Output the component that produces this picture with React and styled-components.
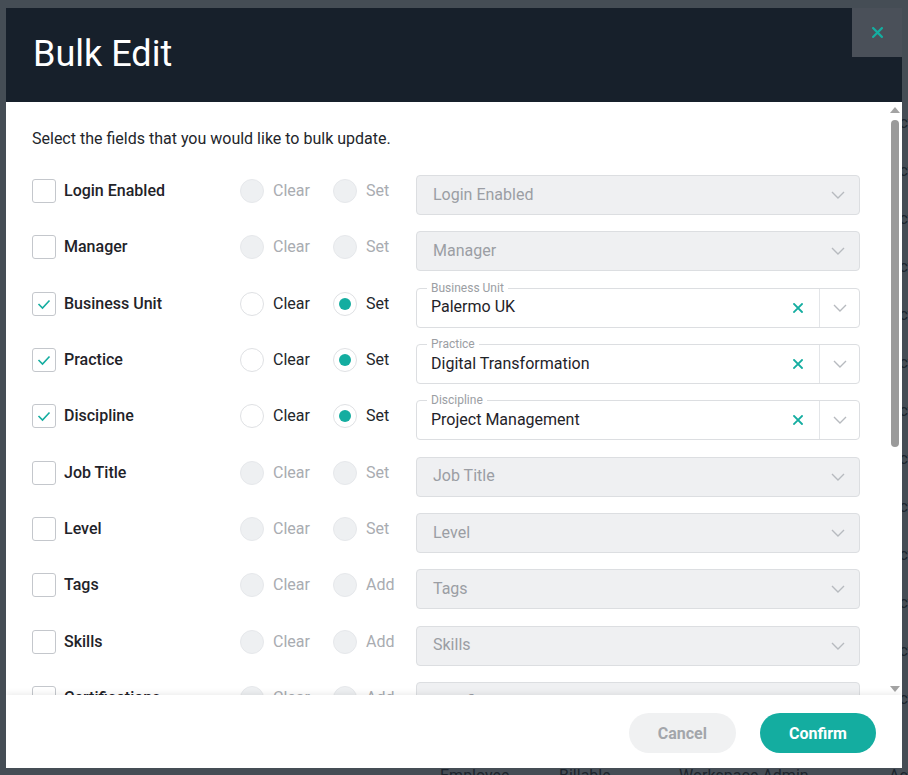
import React from "react";
import styled, { createGlobalStyle } from "styled-components";

const fields = [
  { name: "Login Enabled", mode: "Set" },
  { name: "Manager", mode: "Set" },
  { name: "Business Unit", mode: "Set", checked: true, value: "Palermo UK" },
  { name: "Practice", mode: "Set", checked: true, value: "Digital Transformation" },
  { name: "Discipline", mode: "Set", checked: true, value: "Project Management" },
  { name: "Job Title", mode: "Set" },
  { name: "Level", mode: "Set" },
  { name: "Tags", mode: "Add" },
  { name: "Skills", mode: "Add" },
  { name: "Certifications", mode: "Add" },
  { name: "Location", mode: "Set" },
  { name: "Employment Type", mode: "Set" },
  { name: "Cost Rate", mode: "Set" },
  { name: "Bill Rate", mode: "Set" },
  { name: "Working Hours", mode: "Set" },
  { name: "Calendar", mode: "Set" },
  { name: "Start Date", mode: "Set" },
];

const CheckIcon = () => (
  <svg width="24" height="24" viewBox="0 0 24 24">
    <polyline points="6.5,12 10.5,16 17.5,8.5" fill="none" stroke="#14ada0" strokeWidth="1.6" />
  </svg>
);

const Cross = ({ size = 10, width = 2 }) => (
  <svg width={size} height={size} viewBox="0 0 10 10">
    <path d="M1 1 L9 9 M9 1 L1 9" stroke="#14ada0" strokeWidth={width} strokeLinecap="square" />
  </svg>
);

const Chevron = () => (
  <svg width="14" height="8" viewBox="0 0 14 8">
    <polyline points="1,1 7,7 13,1" fill="none" stroke="#b7babf" strokeWidth="1.4" />
  </svg>
);

const Arrow = ({ down }) => (
  <svg width="10" height="6" viewBox="0 0 10 6">
    <polygon points={down ? "0,0 10,0 5,6" : "0,6 10,6 5,0"} fill="#a3a3a3" />
  </svg>
);

const Radio = ({ label, checked, disabled }) => (
  <RadioOption>
    <RadioCircle checked={checked} disabled={disabled} />
    <RadioLabel disabled={disabled}>{label}</RadioLabel>
  </RadioOption>
);

const FieldRow = ({ field }) => {
  const on = !!field.checked;
  return (
    <Row>
      <Checkbox checked={on}>{on && <CheckIcon />}</Checkbox>
      <FieldName>{field.name}</FieldName>
      <RadioSlot width={93}>
        <Radio label="Clear" disabled={!on} />
      </RadioSlot>
      <RadioSlot width={83}>
        <Radio label={field.mode} checked={on} disabled={!on} />
      </RadioSlot>
      {on ? (
        <Select>
          <FloatLabel>{field.name}</FloatLabel>
          <SelectValue>{field.value}</SelectValue>
          <ClearBtn>
            <Cross size={10} width={1.8} />
          </ClearBtn>
          <Divider />
          <Caret>
            <Chevron />
          </Caret>
        </Select>
      ) : (
        <Select disabled>
          <Placeholder>{field.name}</Placeholder>
          <Caret narrow>
            <Chevron />
          </Caret>
        </Select>
      )}
    </Row>
  );
};

const App = () => {
  return (
    <>
      <GlobalStyle />
      <Page>
        <BackRows>
          {Array.from({ length: 13 }).map((_, i) => (
            <BackRow key={i}>
              <BackCell>Act</BackCell>
            </BackRow>
          ))}
        </BackRows>
        <BackHead>
          <span>Employee</span>
          <span>Billable</span>
          <span>Workspace Admin</span>
          <span>Act</span>
        </BackHead>
      </Page>
      <Overlay>
        <Modal>
          <Header>
            <Title>Bulk Edit</Title>
            <CloseButton>
              <Cross size={11} width={2} />
            </CloseButton>
          </Header>
          <Body>
            <Scroller>
              <Intro>Select the fields that you would like to bulk update.</Intro>
              <Rows>
                {fields.map((f) => (
                  <FieldRow key={f.name} field={f} />
                ))}
              </Rows>
            </Scroller>
            <ScrollTrack>
              <Arrow />
              <Thumb />
              <Arrow down />
            </ScrollTrack>
          </Body>
          <Footer>
            <Button>Cancel</Button>
            <Button primary>Confirm</Button>
          </Footer>
        </Modal>
      </Overlay>
    </>
  );
};

export default App;

const GlobalStyle = createGlobalStyle`
  html, body {
    margin: 0;
    padding: 0;
    height: 100%;
    overflow: hidden;
    font-family: Roboto, "Noto Sans", sans-serif;
    background: #fff;
  }
  * { box-sizing: border-box; }
`;

const Page = styled.div`
  height: 775px;
  width: 908px;
  overflow: hidden;
  display: flex;
  flex-direction: column;
  color: #333;
  font-size: 16px;
`;

const BackRows = styled.div`
  padding-top: 98px;
  flex: 1;
  overflow: hidden;
`;

const BackRow = styled.div`
  height: 48px;
  display: flex;
  align-items: center;
  padding-left: 889px;
`;

const BackCell = styled.span`
  white-space: nowrap;
`;

const BackHead = styled.div`
  display: grid;
  grid-template-columns: 119px 120px 210px 19px;
  padding-left: 440px;
  height: 9px;
  white-space: nowrap;
  font-size: 16px;
  line-height: 20px;
`;

const Overlay = styled.div`
  position: fixed;
  inset: 0;
  background: rgba(23, 32, 43, 0.8);
  padding: 8px 6px 7px 6px;
  display: flex;
`;

const Modal = styled.div`
  flex: 1;
  display: flex;
  flex-direction: column;
  background: #fff;
  overflow: hidden;
`;

const Header = styled.div`
  height: 94px;
  flex-shrink: 0;
  background: #17202b;
  display: flex;
  align-items: flex-start;
  justify-content: space-between;
`;

const Title = styled.h1`
  margin: 0;
  padding: 25px 0 0 27px;
  font-size: 36px;
  font-weight: 400;
  line-height: 42px;
  color: #fff;
`;

const CloseButton = styled.div`
  width: 50px;
  height: 49px;
  background: #4a5059;
  display: flex;
  align-items: center;
  justify-content: center;
`;

const Body = styled.div`
  flex: 1;
  min-height: 0;
  display: flex;
`;

const Scroller = styled.div`
  flex: 1;
  overflow: hidden;
  padding: 25px 28px 24px 26px;
`;

const ScrollTrack = styled.div`
  width: 14px;
  flex-shrink: 0;
  display: flex;
  flex-direction: column;
  align-items: center;
  padding: 5px 0 3px 0;
  & > svg:last-child {
    margin-top: auto;
  }
`;

const Thumb = styled.div`
  width: 8px;
  height: 327px;
  margin-top: 7px;
  margin-right: 1px;
  border-radius: 4px;
  background: #9a9a9a;
`;

const Intro = styled.p`
  margin: 0 0 24px 0;
  font-size: 16px;
  line-height: 24px;
  color: #23262b;
`;

const Rows = styled.div`
  display: flex;
  flex-direction: column;
  gap: 16.35px;
`;

const Row = styled.div`
  display: flex;
  align-items: flex-start;
  height: 40px;
`;

const Checkbox = styled.div`
  width: 24px;
  height: 24px;
  margin-top: 4px;
  flex-shrink: 0;
  border: 1px solid #c4c7cc;
  border-radius: 3px;
  background: #fff;
  display: flex;
  align-items: center;
  justify-content: center;
  & svg {
    margin: -1px;
  }
`;

const FieldName = styled.div`
  width: 176px;
  margin: 4px 0 0 8px;
  font-size: 16px;
  line-height: 24px;
  font-weight: 500;
  color: #1f2329;
  white-space: nowrap;
`;

const RadioSlot = styled.div`
  width: ${(p) => p.width}px;
  margin-top: 4px;
  flex-shrink: 0;
`;

const RadioOption = styled.div`
  display: flex;
  align-items: center;
  gap: 9px;
`;

const RadioCircle = styled.div`
  width: 24px;
  height: 24px;
  border-radius: 50%;
  border: 1px solid ${(p) => (p.disabled ? "#e6e8eb" : "#dfe1e4")};
  background: ${(p) => (p.disabled ? "#eef0f2" : "#fff")};
  display: flex;
  align-items: center;
  justify-content: center;
  &::after {
    content: "";
    display: ${(p) => (p.checked ? "block" : "none")};
    width: 12px;
    height: 12px;
    border-radius: 50%;
    background: #14ada0;
  }
`;

const RadioLabel = styled.span`
  font-size: 16px;
  line-height: 24px;
  color: ${(p) => (p.disabled ? "#a9acb1" : "#23262b")};
`;

const Select = styled.div`
  position: relative;
  flex: 1;
  height: 40px;
  display: flex;
  align-items: center;
  border: 1px solid #dcdee1;
  border-radius: 4px;
  background: ${(p) => (p.disabled ? "#eff0f2" : "#fff")};
`;

const FloatLabel = styled.span`
  position: absolute;
  top: -9px;
  left: 10px;
  padding: 0 4px;
  background: #fff;
  font-size: 12px;
  line-height: 16px;
  color: #9b9ea3;
`;

const SelectValue = styled.span`
  flex: 1;
  padding: 0 0 2px 14px;
  font-size: 16px;
  color: #1f2329;
`;

const Placeholder = styled.span`
  flex: 1;
  padding: 0 0 2px 16px;
  font-size: 16px;
  color: #9b9ea4;
`;

const ClearBtn = styled.span`
  width: 24px;
  display: flex;
  justify-content: center;
  margin-right: 9px;
`;

const Divider = styled.span`
  align-self: stretch;
  width: 1px;
  background: #e3e5e8;
`;

const Caret = styled.span`
  width: ${(p) => (p.narrow ? "42px" : "39px")};
  display: flex;
  justify-content: center;
`;

const Footer = styled.div`
  height: 73px;
  flex-shrink: 0;
  display: flex;
  align-items: center;
  justify-content: flex-end;
  gap: 24px;
  padding: 3px 26px 0 0;
  background: #fff;
  box-shadow: 0 -2px 6px rgba(0, 0, 0, 0.07);
  position: relative;
`;

const Button = styled.button`
  height: 40px;
  border: none;
  border-radius: 20px;
  padding: 0 29px;
  min-width: ${(p) => (p.primary ? "116px" : "107px")};
  font-family: Roboto, sans-serif;
  font-size: 16px;
  font-weight: 700;
  background: ${(p) => (p.primary ? "#14ada0" : "#f0f1f2")};
  color: ${(p) => (p.primary ? "#fff" : "#a3a6ab")};
`;
